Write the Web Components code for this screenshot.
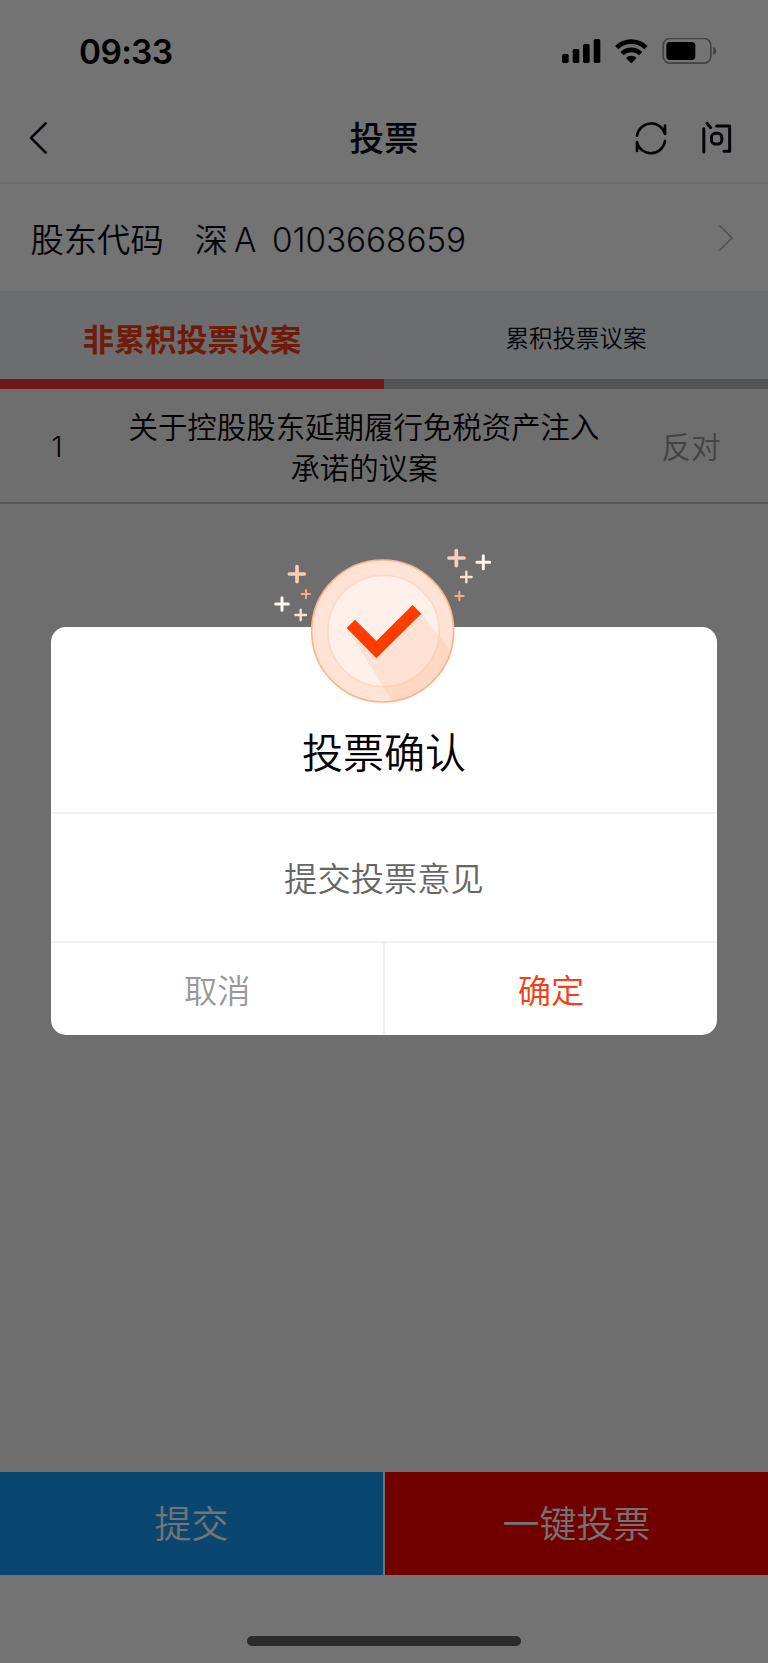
<!DOCTYPE html>
<html lang="zh-CN">
<head>
<meta charset="UTF-8">
<title>投票</title>
<style>
  body {
    margin: 0;
    font-family: Inter, "Noto Sans CJK SC", sans-serif;
    font-weight: 350;
    --dark: #080b14;
    --accent: #f43e15;
    --page: #f4f4f4;
  }
</style>
</head>
<body>
<vote-page></vote-page>

<script>
// Status bar
class StatusBar extends HTMLElement {
  constructor() {
    super();
    this.attachShadow({ mode: 'open' });
  }

  connectedCallback() {
    this.shadowRoot.innerHTML = `
      <style>
        :host {
          display: flex;
          justify-content: space-between;
          align-items: center;
          height: 102px;
          box-sizing: border-box;
          padding: 0 52px 0 79px;
          background: #fff;
          color: #000;
        }

        .time {
          padding-top: 2px;
          font-size: 33.5px;
          font-weight: 600;
          letter-spacing: -0.7px;
        }

        svg {
          display: block;
          width: 154.33px;
          height: 26px;
        }
      </style>

      <span class="time">${this.getAttribute('time')}</span>
      <svg viewBox="533 114 463 78">
        <rect x="533" y="162" width="20" height="27" rx="5"/>
        <rect x="565" y="147" width="20" height="42" rx="5"/>
        <rect x="596" y="132" width="20" height="57" rx="5"/>
        <rect x="628" y="117" width="20" height="72" rx="5"/>
        <g fill="none" stroke="#000" stroke-width="14">
          <path d="M697 143 A63 63 0 0 1 785 143"/>
          <path d="M713 161 A40 40 0 0 1 769 161"/>
        </g>
        <path d="M725 174 A23 23 0 0 1 757 174 L743 188 Q741 190 739 188 Z"/>
        <rect x="836.500" y="115.500" width="143" height="74" rx="20" fill="none" stroke="#000" stroke-opacity=".42" stroke-width="5"/>
        <rect x="846" y="126" width="87" height="54" rx="11"/>
        <path d="M987 141 Q996 145 996 153 Q996 161 987 165 Z" fill-opacity=".45"/>
      </svg>
    `;
  }
}

// Title bar with back, refresh and question buttons
class NavBar extends HTMLElement {
  constructor() {
    super();
    this.attachShadow({ mode: 'open' });
  }

  connectedCallback() {
    this.shadowRoot.innerHTML = `
      <style>
        :host {
          display: grid;
          grid-template-columns: 1fr auto 1fr;
          align-items: center;
          height: 82px;
          box-sizing: border-box;
          padding: 0 34px 8px 28px;
          background: #fff;
          border-bottom: 2px solid #eaebed;
          color: var(--dark);
        }

        .title {
          font-size: 34.5px;
          font-weight: 500;
          line-height: 40px;
          padding-left: 6px;
          padding-top: 1px;
        }

        svg {
          display: block;
          height: 35.33px;
          fill: none;
          stroke: currentColor;
          stroke-width: 8;
          stroke-linecap: round;
          stroke-linejoin: round;
        }

        .tools {
          justify-self: end;
        }
      </style>

      <svg viewBox="84 360 60 106" width="20"><path d="M137 370 L93 413.500 L137 458"/></svg>
      <span class="title"><slot></slot></span>
      <svg class="tools" viewBox="750 360 300 106" width="100">
        <path d="M759 407 A43 43 0 0 1 843 402 M843 377 V402 M843 423 A43 43 0 0 1 759 428 M759 426 V453"/>
        <path stroke-width="9" d="M959.500 386 V456 M969 370 L980 383 M998 378 H1037 V454 H1020"/>
        <rect stroke-width="9" x="982.500" y="400" width="31" height="32" rx="12"/>
      </svg>
    `;
  }
}

// Shareholder account row
class AccountRow extends HTMLElement {
  constructor() {
    super();
    this.attachShadow({ mode: 'open' });
  }

  connectedCallback() {
    this.shadowRoot.innerHTML = `
      <style>
        :host {
          display: flex;
          align-items: center;
          height: 109px;
          box-sizing: border-box;
          padding: 0 34px 0 30.5px;
          background: #fff;
          border-bottom: 2px solid #e4e6ea;
          color: var(--dark);
          font-size: 33.3px;
        }

        .market {
          margin-left: 31px;
        }

        .type {
          margin-left: 6px;
          padding-top: 4px;
        }

        .code {
          margin-left: 15.5px;
          padding-top: 4px;
          letter-spacing: -0.05px;
        }

        svg {
          display: block;
          margin-left: auto;
          fill: none;
          stroke: #b4b6bf;
          stroke-width: 1.7;
        }
      </style>

      <span>股东代码</span>
      <span class="market">深</span>
      <span class="type">A</span>
      <span class="code">${this.getAttribute('code')}</span>
      <svg width="16" height="28" viewBox="0 0 16 28"><path d="M1.500 1.500 L14 14 L1.500 26.500"/></svg>
    `;
  }
}

// Two proposal tabs, the first one is active
class ProposalTabs extends HTMLElement {
  constructor() {
    super();
    this.attachShadow({ mode: 'open' });
  }

  connectedCallback() {
    this.shadowRoot.innerHTML = `
      <style>
        :host {
          display: grid;
          grid-template-columns: 1fr 1fr;
          height: 96px;
          background: #f0f2f7;
          color: var(--dark);
        }

        .tab {
          display: flex;
          align-items: center;
          justify-content: center;
          border-bottom: 10px solid #bbb;
          padding-top: 2px;
          font-size: 23.5px;
        }

        .active {
          border-color: #fb3535;
          color: var(--accent);
          font-size: 31.2px;
          font-weight: 700;
        }
      </style>

      <div class="tab active">非累积投票议案</div>
      <div class="tab">累积投票议案</div>
    `;
  }
}

// One proposal with its chosen opinion
class ProposalRow extends HTMLElement {
  constructor() {
    super();
    this.attachShadow({ mode: 'open' });
  }

  connectedCallback() {
    this.shadowRoot.innerHTML = `
      <style>
        :host {
          display: grid;
          grid-template-columns: 114px 500px 154px;
          align-items: center;
          text-align: center;
          height: 115px;
          box-sizing: border-box;
          padding-top: 5px;
          border-bottom: 2px solid #bebebe;
          background: var(--page);
          color: #000;
          font-size: 29.45px;
          line-height: 41.5px;
        }

        .number {
          font-size: 28px;
        }

        .opinion {
          color: #949494;
        }
      </style>

      <span class="number">${this.getAttribute('number')}</span>
      <span><slot></slot></span>
      <span class="opinion">${this.getAttribute('opinion')}</span>
    `;
  }
}

// Bottom buttons and home indicator
class BottomActions extends HTMLElement {
  constructor() {
    super();
    this.attachShadow({ mode: 'open' });
  }

  connectedCallback() {
    this.shadowRoot.innerHTML = `
      <style>
        :host {
          display: block;
          height: 191px;
          background: #fff;
        }

        .buttons {
          display: grid;
          grid-template-columns: 1fr 1fr;
          gap: 2px;
          height: 102.5px;
        }

        .button {
          display: flex;
          align-items: center;
          justify-content: center;
          padding-bottom: 2px;
          font-size: 37px;
          color: #fff;
          background: #149ef9;
        }

        .all {
          background: #f90000;
        }

        .home {
          width: 274px;
          height: 10px;
          margin: 61.5px auto 0;
          border-radius: 5px;
          background: #5f5f5f;
        }
      </style>

      <div class="buttons">
        <div class="button">提交</div>
        <div class="button all">一键投票</div>
      </div>
      <div class="home"></div>
    `;
  }
}

// Medal with a tick and sparkles
class MedalIcon extends HTMLElement {
  constructor() {
    super();
    this.attachShadow({ mode: 'open' });
  }

  connectedCallback() {
    this.shadowRoot.innerHTML = `
      <style>
        :host {
          display: block;
        }

        svg {
          display: block;
          width: 220px;
          height: 156.67px;
        }
      </style>

      <svg viewBox="40 50 660 470">
        <defs><clipPath id="disc"><circle cx="369" cy="302" r="212"/></clipPath></defs>
        <circle cx="369" cy="302" r="213" fill="#ffe4d6" stroke="#fdb48a" stroke-width="5"/>
        <circle cx="371.500" cy="302" r="167" fill="#fff1e9" stroke="#ffd8c4" stroke-width="5"/>
        <path d="M262 293 L397 512 L600 520 V392 L484 250 L350 384 Z" fill="#ffb18b" fill-opacity=".23" clip-path="url(#disc)"/>
        <path d="M261 293 L286 268 L350 332 L459 224 L485 250 L350 384 Z" fill="#ff3d00"/>
        <g fill="none" stroke-linecap="round">
          <path d="M112 109 V154 M89 131 H134 M590 61 V106 M568 83 H613" stroke="#fccdb4" stroke-width="11"/>
          <path d="M67 202 V240 M48 221 H86 M671 76 V115 M652 96 H690" stroke="#fff5ef" stroke-width="9"/>
          <path d="M123 238 V270 M107 254 H139 M620 124 V156 M604 140 H636" stroke="#fee0d0" stroke-width="7"/>
          <path d="M139 179 V204 M126 191 H151 M599 184 V210 M587 197 H612" stroke="#f7ac80" stroke-width="6"/>
        </g>
      </svg>
    `;
  }
}

// Confirmation dialog, covers the page with a mask
class ConfirmDialog extends HTMLElement {
  constructor() {
    super();
    this.attachShadow({ mode: 'open' });
  }

  connectedCallback() {
    this.shadowRoot.innerHTML = `
      <style>
        :host {
          position: absolute;
          inset: 0;
          display: flex;
          justify-content: center;
          align-items: flex-start;
          box-sizing: border-box;
          padding-top: 627.3px;
          background: rgba(0, 0, 0, .55);
        }

        .box {
          position: relative;
          display: grid;
          grid-template-rows: 185px 1fr 92px;
          width: 665.4px;
          height: 407.4px;
          border-radius: 15px;
          background: #fff;
          text-align: center;
          font-size: 33.3px;
        }

        medal-icon {
          position: absolute;
          left: 222px;
          top: -80.6px;
        }

        .title {
          padding-top: 96px;
          font-size: 41px;
          line-height: 60px;
          color: #000;
        }

        .message {
          display: flex;
          align-items: center;
          justify-content: center;
          padding-bottom: 2px;
          border: solid #f0f0f0;
          border-width: 2px 0;
          color: #666;
        }

        .buttons {
          display: grid;
          grid-template-columns: 334px 1fr;
        }

        .buttons span {
          display: flex;
          align-items: center;
          justify-content: center;
        }

        .cancel {
          border-right: 2px solid #efefef;
          color: #999;
        }

        .ok {
          color: var(--accent);
        }
      </style>

      <div class="box">
        <medal-icon></medal-icon>
        <div class="title">${this.getAttribute('heading')}</div>
        <div class="message"><slot></slot></div>
        <div class="buttons">
          <span class="cancel">取消</span>
          <span class="ok">确定</span>
        </div>
      </div>
    `;
  }
}

// Whole screen
class VotePage extends HTMLElement {
  constructor() {
    super();
    this.attachShadow({ mode: 'open' });
  }

  connectedCallback() {
    this.shadowRoot.innerHTML = `
      <style>
        :host {
          position: relative;
          display: flex;
          flex-direction: column;
          width: 768px;
          height: 1663px;
          overflow: hidden;
          background: var(--page);
        }

        bottom-actions {
          margin-top: auto;
        }
      </style>

      <status-bar time="09:33"></status-bar>
      <nav-bar>投票</nav-bar>
      <account-row code="0103668659"></account-row>
      <proposal-tabs></proposal-tabs>
      <proposal-row number="1" opinion="反对">关于控股股东延期履行免税资产注入<br>承诺的议案</proposal-row>
      <bottom-actions></bottom-actions>
      <confirm-dialog heading="投票确认">提交投票意见</confirm-dialog>
    `;
  }
}

// Register the components
customElements.define('status-bar', StatusBar);
customElements.define('nav-bar', NavBar);
customElements.define('account-row', AccountRow);
customElements.define('proposal-tabs', ProposalTabs);
customElements.define('proposal-row', ProposalRow);
customElements.define('bottom-actions', BottomActions);
customElements.define('medal-icon', MedalIcon);
customElements.define('confirm-dialog', ConfirmDialog);
customElements.define('vote-page', VotePage);
</script>
</body>
</html>
